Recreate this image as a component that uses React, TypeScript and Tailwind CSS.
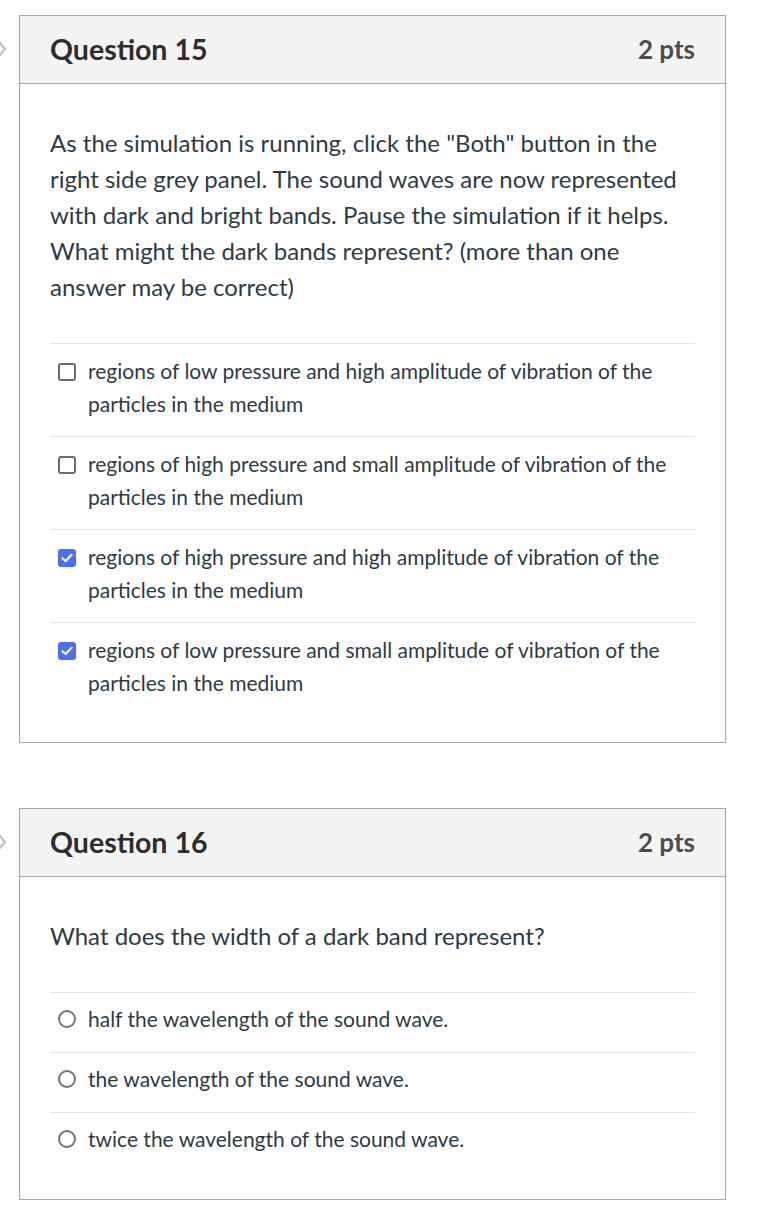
import React from 'react';

type Answer = { text: string; checked?: boolean };

interface QuestionProps {
  number: number;
  points: string;
  prompt: string;
  kind: 'checkbox' | 'radio';
  answers: Answer[];
}

const Chevron = () => (
  <svg width="19" height="20" viewBox="0 0 19 20" className="shrink-0">
    <path d="M-2 2 L5 10 L-2 18" fill="none" stroke="#b9c3cc" strokeWidth="2.2" />
  </svg>
);

const CheckBox = ({ checked }: { checked?: boolean }) =>
  checked ? (
    <span className="mt-[9px] flex h-[18px] w-[18px] shrink-0 items-center justify-center rounded-[3px] bg-[#4a6ef5]">
      <svg width="12" height="10" viewBox="0 0 12 10">
        <path d="M1.5 5.2 L4.6 8 L10.5 1.8" fill="none" stroke="#fff" strokeWidth="2.2" strokeLinecap="round" strokeLinejoin="round" />
      </svg>
    </span>
  ) : (
    <span className="mt-[9px] h-[18px] w-[18px] shrink-0 rounded-[3px] border-2 border-[#6b6b6b] bg-white" />
  );

const Radio = () => (
  <span className="mt-[8px] h-[18px] w-[18px] shrink-0 rounded-full border-2 border-[#737373] bg-white" />
);

const Question: React.FC<QuestionProps> = ({ number, points, prompt, kind, answers }) => {
  return (
    <div className="flex items-start">
      <div className="flex h-[68px] w-[19px] items-center">
        <Chevron />
      </div>
      <div className="w-[707px] border border-[#a8a8a8] bg-white">
        {/* Header */}
        <div className="flex h-[68px] items-center justify-between border-b border-[#a8a8a8] bg-[#f4f4f4] px-[30px]">
          <h2 className="text-[28.5px] font-bold text-[#2d2d2d]">Question {number}</h2>
          <span className="text-[26px] font-bold text-[#4d4d4d]">{points}</span>
        </div>

        {/* Body */}
        <div className="px-[30px] pb-[27px] pt-[41px]">
          <p className="text-[24px] leading-[36px] text-[#2d3b45]">{prompt}</p>
          <div className="mt-[38px]">
            {answers.map((a, i) => (
              <div
                key={i}
                className={
                  kind === 'checkbox'
                    ? 'flex gap-[12px] border-t border-[#e2e2e2] pb-[16px] pl-[8px] pt-[10px]'
                    : 'flex gap-[12px] border-t border-[#e2e2e2] pb-[17px] pl-[8px] pt-[9px]'
                }
              >
                {kind === 'checkbox' ? <CheckBox checked={a.checked} /> : <Radio />}
                <span className="text-[21px] leading-[33px] text-[#2d3b45]">{a.text}</span>
              </div>
            ))}
          </div>
        </div>
      </div>
    </div>
  );
};

export default function App() {
  return (
    <div className="min-h-screen bg-white pt-[15px] font-['Lato','Liberation_Sans',sans-serif]">
      <div className="flex flex-col gap-[65px]">
        <Question
          number={15}
          points="2 pts"
          kind="checkbox"
          prompt={'As the simulation is running, click the "Both" button in the right side grey panel. The sound waves are now represented with dark and bright bands. Pause the simulation if it helps. What might the dark bands represent? (more than one answer may be correct)'}
          answers={[
            { text: 'regions of low pressure and high amplitude of vibration of the particles in the medium' },
            { text: 'regions of high pressure and small amplitude of vibration of the particles in the medium' },
            { text: 'regions of high pressure and high amplitude of vibration of the particles in the medium', checked: true },
            { text: 'regions of low pressure and small amplitude of vibration of the particles in the medium', checked: true },
          ]}
        />
        <Question
          number={16}
          points="2 pts"
          kind="radio"
          prompt="What does the width of a dark band represent?"
          answers={[
            { text: 'half the wavelength of the sound wave.' },
            { text: 'the wavelength of the sound wave.' },
            { text: 'twice the wavelength of the sound wave.' },
          ]}
        />
      </div>
    </div>
  );
}
